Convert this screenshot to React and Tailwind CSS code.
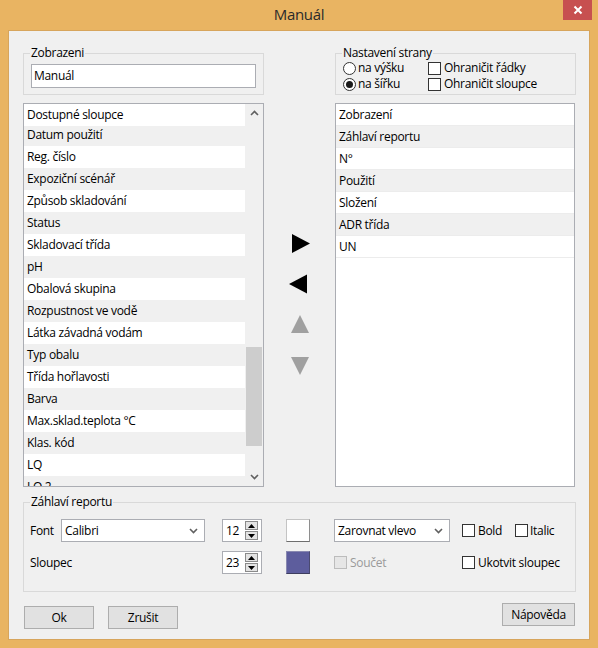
const leftRows = [
  'Datum použití',
  'Reg. číslo',
  'Expoziční scénář',
  'Způsob skladování',
  'Status',
  'Skladovací třída',
  'pH',
  'Obalová skupina',
  'Rozpustnost ve vodě',
  'Látka závadná vodám',
  'Typ obalu',
  'Třída hořlavosti',
  'Barva',
  'Max.sklad.teplota °C',
  'Klas. kód',
  'LQ',
  'LQ 2',
]

const rightRows = ['Zobrazení', 'Záhlaví reportu', 'N°', 'Použití', 'Složení', 'ADR třída', 'UN']

// small helpers for the win8 look
const Check = ({ disabled }) => (
  <span
    className={
      disabled
        ? 'w-[13px] h-[13px] shrink-0 border border-[#bcbcbc] bg-[#e6e6e6]'
        : 'w-[13px] h-[13px] shrink-0 border border-[#333] bg-white'
    }
  />
)

const Radio = ({ checked }) => (
  <span className="w-[13px] h-[13px] shrink-0 rounded-full border border-[#333] bg-white flex items-center justify-center">
    {checked && <span className="w-[7px] h-[7px] rounded-full bg-[#1a1a1a]" />}
  </span>
)

const Chevron = ({ up }) => (
  <svg width="9" height="6" viewBox="0 0 9 6">
    <polyline
      points={up ? '1,5 4.5,1.5 8,5' : '1,1 4.5,4.5 8,1'}
      fill="none"
      stroke="#606060"
      strokeWidth="1.6"
    />
  </svg>
)

const Group = ({ label, className, children }) => (
  <div className={`border border-[#d9d9d9] ${className}`}>
    <div className="-mt-[8px] ml-[6px] px-[1px] w-fit bg-[#f0f0f0] leading-[14px]">{label}</div>
    {children}
  </div>
)

const Select = ({ value, className }) => (
  <div className={`h-[23px] border border-[#abadb3] bg-white flex items-center pl-[3px] pr-[6px] ${className}`}>
    <span className="flex-1">{value}</span>
    <Chevron />
  </div>
)

const Spinner = ({ value }) => (
  <div className="w-[40px] h-[23px] border border-[#abadb3] bg-white flex items-center pl-[3px]">
    <span className="flex-1">{value}</span>
    <div className="w-[13px] h-[19px] mr-[3px] flex flex-col gap-[1px]">
      <div className="flex-1 border border-[#8a8a8a] bg-[#e3e3e3] flex items-center justify-center">
        <svg width="7" height="4" viewBox="0 0 7 4">
          <polygon points="0,4 3.5,0 7,4" fill="#000" />
        </svg>
      </div>
      <div className="flex-1 border border-[#8a8a8a] bg-[#e3e3e3] flex items-center justify-center">
        <svg width="7" height="4" viewBox="0 0 7 4">
          <polygon points="0,0 3.5,4 7,0" fill="#000" />
        </svg>
      </div>
    </div>
  </div>
)

const Button = ({ children, className }) => (
  <div
    className={`h-[23px] border border-[#adadad] bg-[#e1e1e1] flex items-center justify-center ${className}`}
  >
    {children}
  </div>
)

export default function App() {
  return (
    <div className="w-[598px] h-[648px] bg-[#e9b462] flex flex-col font-['Open_Sans',sans-serif] text-[12px] tracking-[-0.3px] text-black">
      {/* title bar */}
      <div className="h-[30px] relative flex items-center justify-center">
        <span className="text-[15px] text-[#2a2a2a] -mt-[1px]">Manuál</span>
        <div className="absolute right-[6px] top-0 w-[29px] h-[20px] bg-[#c75050] flex items-center justify-center">
          <svg width="10" height="10" viewBox="0 0 10 10">
            <path d="M1.5 1.5 L8.5 8.5 M8.5 1.5 L1.5 8.5" stroke="#fff" strokeWidth="2" />
          </svg>
        </div>
      </div>

      {/* client area */}
      <div className="mx-[8px] mb-[8px] flex-1 bg-[#f0f0f0] border border-[#d7a55c] flex flex-col">
        <div className="flex pl-[14px] pt-[22px]">
          {/* left column */}
          <div className="w-[241px] flex flex-col">
            <Group label="Zobrazeni" className="h-[42px]">
              <div className="mt-[4px] ml-[7px] w-[225px] h-[24px] border border-[#abadb3] bg-white flex items-center px-[2px]">
                Manuál
              </div>
            </Group>
            <div className="mt-[8px] h-[384px] border border-[#abadb3] bg-white flex overflow-hidden">
              <div className="flex-1 flex flex-col overflow-hidden">
                <div className="h-[22px] shrink-0 leading-[22px] pl-[3px] bg-white">Dostupné sloupce</div>
                {leftRows.map((r, i) => (
                  <div
                    key={r}
                    className={
                      (i === 0 ? 'h-[20px] leading-[18px] ' : 'h-[22px] leading-[22px] ') +
                      (i % 2 === 0 ? 'bg-[#f0f0f0]' : 'bg-white') +
                      ' shrink-0 pl-[3px] whitespace-nowrap'
                    }
                  >
                    {r}
                  </div>
                ))}
              </div>
              <div className="w-[18px] bg-[#f0f0f0] flex flex-col items-center">
                <div className="h-[18px] flex items-center justify-center">
                  <Chevron up />
                </div>
                <div className="flex-1 w-full pt-[225px] pb-[22px] px-[1px] flex">
                  <div className="flex-1 bg-[#cdcdcd]" />
                </div>
                <div className="h-[18px] flex items-center justify-center">
                  <Chevron />
                </div>
              </div>
            </div>
          </div>

          {/* move buttons */}
          <div className="w-[71px] flex flex-col items-center pt-[180px] gap-[20px]">
            <svg width="20" height="21" viewBox="0 0 20 21" className="ml-[3px]">
              <polygon points="1,1 19,10.5 1,20" fill="#000" />
            </svg>
            <svg width="20" height="20" viewBox="0 0 20 20" className="-ml-[3px]">
              <polygon points="19,0.5 1,10 19,19.5" fill="#000" />
            </svg>
            <svg width="20" height="20" viewBox="0 0 20 20">
              <polygon points="1,19 10,1 19,19" fill="#a0a0a0" />
            </svg>
            <svg width="20" height="20" viewBox="0 0 20 20" className="mt-[2px]">
              <polygon points="1,1 10,19 19,1" fill="#a0a0a0" />
            </svg>
          </div>

          {/* right column */}
          <div className="w-[241px] flex flex-col">
            <Group label="Nastavení strany" className="h-[42px]">
              <div className="ml-[7px] grid grid-cols-[85px_1fr] leading-[16px]">
                <div className="flex items-center gap-[2px] h-[16px]">
                  <Radio />
                  <span>na výšku</span>
                </div>
                <div className="flex items-center gap-[3px] h-[16px]">
                  <Check />
                  <span>Ohraničit řádky</span>
                </div>
                <div className="flex items-center gap-[2px] h-[16px]">
                  <Radio checked />
                  <span>na šířku</span>
                </div>
                <div className="flex items-center gap-[3px] h-[16px]">
                  <Check />
                  <span>Ohraničit sloupce</span>
                </div>
              </div>
            </Group>
            <div className="mt-[8px] w-[240px] h-[384px] border border-[#abadb3] bg-white flex flex-col">
              {rightRows.map((r, i) => (
                <div
                  key={r}
                  className={
                    (i % 2 === 1 ? 'bg-[#f0f0f0]' : 'bg-white') +
                    ' h-[22px] leading-[21px] pl-[3px] border-b border-[#ececec]'
                  }
                >
                  {r}
                </div>
              ))}
            </div>
          </div>
        </div>

        {/* report header group */}
        <Group label="Záhlaví reportu" className="mt-[15px] ml-[14px] w-[553px] h-[90px]">
          <div className="mt-[10px] ml-[6px] grid grid-cols-[192px_64px_48px_128px_1fr] grid-rows-[23px_23px] gap-y-[9px] items-center">
            <div className="flex items-center">
              <span className="w-[31px]">Font</span>
              <Select value="Calibri" className="w-[144px]" />
            </div>
            <Spinner value="12" />
            <div className="w-[24px] h-[23px] bg-white border border-[#c4c4c4] border-b-[#6e6e6e] border-r-[#8e8e8e]" />
            <Select value="Zarovnat vlevo" className="w-[116px]" />
            <div className="flex items-center">
              <Check />
              <span className="ml-[3px] w-[37px]">Bold</span>
              <Check />
              <span className="ml-[2px]">Italic</span>
            </div>

            <span>Sloupec</span>
            <Spinner value="23" />
            <div className="w-[24px] h-[23px] bg-[#5d5d9d] border border-[#8888b0] border-b-[#3d3d5e] border-r-[#4a4a70]" />
            <div className="flex items-center">
              <Check disabled />
              <span className="ml-[3px] text-[#9a9a9a]">Součet</span>
            </div>
            <div className="flex items-center">
              <Check />
              <span className="ml-[3px]">Ukotvit sloupec</span>
            </div>
          </div>
        </Group>

        {/* dialog buttons */}
        <div className="flex items-start mt-[11px] pl-[15px] pr-[14px]">
          <Button className="mt-[3px] w-[70px]">Ok</Button>
          <Button className="mt-[3px] ml-[14px] w-[70px]">Zrušit</Button>
          <Button className="ml-auto w-[73px]">Nápověda</Button>
        </div>
      </div>
    </div>
  )
}
